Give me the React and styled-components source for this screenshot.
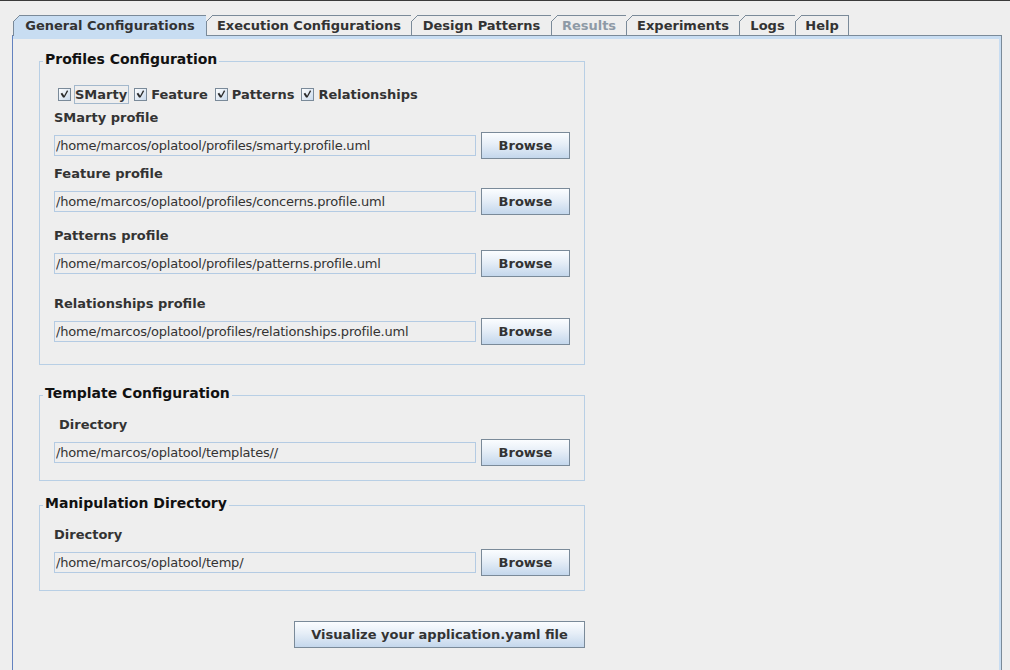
import React from 'react';
import styled, { createGlobalStyle } from 'styled-components';

const Global = createGlobalStyle`
  html, body { margin: 0; padding: 0; background: #eeeeee; overflow: hidden; }
  body { font-family: "DejaVu Sans", "Liberation Sans", sans-serif; }
  * { box-sizing: border-box; }
`;

const Window = styled.div`
  width: 1010px;
  height: 670px;
  overflow: hidden;
  background: #eeeeee;
  border-top: 1px solid #3a3a3a;
  padding-top: 14px;
`;

const TabRow = styled.div`
  display: flex;
  align-items: flex-end;
  height: 20px;
  padding-left: 13px;
  position: relative;
  z-index: 1;
`;

const Tab = styled.div`
  position: relative;
  width: ${p => p.$w}px;
  height: ${p => (p.$selected ? 21 : 20)}px;
  margin-bottom: ${p => (p.$selected ? -1 : 0)}px;
  background: ${p => (p.$selected ? '#c8ddf2' : '#eeeeee')};
  border-top: 1px solid #7a8a99;
  border-left: 1px solid #7a8a99;
  border-right: ${p => (p.$last ? '1px solid #7a8a99' : 'none')};
  font-size: 13px;
  font-weight: bold;
  line-height: 19px;
  text-align: center;
  color: ${p => (p.$disabled ? '#8e9aa6' : '#333333')};
  white-space: nowrap;
  &::before {
    content: '';
    position: absolute;
    top: -1px;
    left: -1px;
    width: 7px;
    height: 7px;
    background: linear-gradient(
      135deg,
      #eeeeee 0,
      #eeeeee calc(50% - 0.6px),
      #7a8a99 calc(50% - 0.6px),
      #7a8a99 calc(50% + 0.6px),
      ${p => (p.$selected ? '#c8ddf2' : '#eeeeee')} calc(50% + 0.6px)
    );
  }
`;

const Panel = styled.div`
  margin-left: 12px;
  width: 990px;
  min-height: 700px;
  border: 1px solid #7a8a99;
  border-left-color: #6382bf;
  box-shadow: inset 0 3px 0 #c8ddf2, inset -2px 0 0 #c8ddf2;
  padding: 14px 0 0 26px;
`;

const Section = styled.fieldset`
  width: 546px;
  margin: ${p => p.$mt || 0}px 0 0 0;
  padding: 0 14px ${p => p.$pb}px 14px;
  border: 1px solid #b8cfe5;
  min-width: 0;
`;

const Legend = styled.legend`
  margin-left: -11px;
  padding: 0 2px 5px 2px;
  font-size: 14px;
  font-weight: bold;
  line-height: 18px;
  color: #111111;
`;

const CheckRow = styled.div`
  display: flex;
  align-items: center;
  height: 18px;
  margin-top: 12px;
  padding-left: 4px;
`;

const CheckItem = styled.label`
  display: flex;
  align-items: center;
  margin-right: 5px;
`;

const CheckText = styled.span`
  margin-left: 3px;
  border: 1px solid ${p => (p.$focused ? '#a3b8cc' : 'transparent')};
  padding: 0 1px 0 0;
  height: 19px;
  font-size: 13px;
  font-weight: bold;
  line-height: 17px;
  color: #333333;
`;

const FieldLabel = styled.div`
  margin-top: ${p => p.$mt}px;
  padding-left: ${p => p.$indent || 0}px;
  height: 18px;
  font-size: 13px;
  font-weight: bold;
  line-height: 18px;
  color: #333333;
`;

const Row = styled.div`
  display: flex;
  align-items: center;
  gap: 5px;
  height: 27px;
  margin-top: 5px;
`;

const PathField = styled.input`
  width: 422px;
  height: 21px;
  margin: 0;
  padding: 0 0 0 1px;
  border: 1px solid #b4cbe3;
  background: #eeeeee;
  font-family: "DejaVu Sans", sans-serif;
  font-size: 13px;
  letter-spacing: -0.2px;
  color: #333333;
  outline: none;
`;

const Button = styled.button`
  width: ${p => p.$w}px;
  height: 27px;
  margin: 0;
  padding: 0;
  border: 1px solid #7a8a99;
  background: linear-gradient(#fbfdff 0%, #e6eef7 45%, #c4d7ec 100%);
  font-family: "DejaVu Sans", sans-serif;
  font-size: 13px;
  font-weight: bold;
  color: #333333;
  cursor: pointer;
`;

const ButtonBar = styled.div`
  width: 546px;
  display: flex;
  justify-content: flex-end;
  margin-top: 30px;
`;

const CheckIcon = () => (
  <svg width="13" height="13" viewBox="0 0 13 13">
    <defs>
      <linearGradient id="cbg" x1="0" y1="0" x2="1" y2="1">
        <stop offset="0" stopColor="#ffffff" />
        <stop offset="1" stopColor="#c8d9ec" />
      </linearGradient>
    </defs>
    <rect x="0.5" y="0.5" width="12" height="12" fill="url(#cbg)" stroke="#7a8a99" />
    <path d="M3.4 5.2 L6 9.2" fill="none" stroke="#2b2b2b" strokeWidth="2" />
    <path d="M6 9.2 L9.6 2.6" fill="none" stroke="#2b2b2b" strokeWidth="1.3" />
  </svg>
);

const tabs = [
  { t: 'General Configurations', w: 193, selected: true },
  { t: 'Execution Configurations', w: 205 },
  { t: 'Design Patterns', w: 140 },
  { t: 'Results', w: 75, disabled: true },
  { t: 'Experiments', w: 113 },
  { t: 'Logs', w: 56 },
  { t: 'Help', w: 54, last: true },
];

const profiles = [
  { label: 'SMarty profile', path: '/home/marcos/oplatool/profiles/smarty.profile.uml', mt: 6 },
  { label: 'Feature profile', path: '/home/marcos/oplatool/profiles/concerns.profile.uml', mt: 6 },
  { label: 'Patterns profile', path: '/home/marcos/oplatool/profiles/patterns.profile.uml', mt: 12 },
  { label: 'Relationships profile', path: '/home/marcos/oplatool/profiles/relationships.profile.uml', mt: 18 },
];

const checks = ['SMarty', 'Feature', 'Patterns', 'Relationships'];

export default function App() {
  return (
    <>
      <Global />
      <Window>
        <TabRow>
          {tabs.map(tab => (
            <Tab key={tab.t} $w={tab.w} $selected={tab.selected} $disabled={tab.disabled} $last={tab.last}>
              {tab.t}
            </Tab>
          ))}
        </TabRow>
        <Panel>
          <Section $pb={19}>
            <Legend>Profiles Configuration</Legend>
            <CheckRow>
              {checks.map((c, i) => (
                <CheckItem key={c}>
                  <CheckIcon />
                  <CheckText $focused={i === 0}>{c}</CheckText>
                </CheckItem>
              ))}
            </CheckRow>
            {profiles.map(p => (
              <React.Fragment key={p.label}>
                <FieldLabel $mt={p.mt}>{p.label}</FieldLabel>
                <Row>
                  <PathField readOnly value={p.path} />
                  <Button $w={89}>Browse</Button>
                </Row>
              </React.Fragment>
            ))}
          </Section>

          <Section $mt={19} $pb={14}>
            <Legend>Template Configuration</Legend>
            <FieldLabel $mt={9} $indent={5}>Directory</FieldLabel>
            <Row>
              <PathField readOnly value="/home/marcos/oplatool/templates//" />
              <Button $w={89}>Browse</Button>
            </Row>
          </Section>

          <Section $mt={13} $pb={14}>
            <Legend>Manipulation Directory</Legend>
            <FieldLabel $mt={9}>Directory</FieldLabel>
            <Row>
              <PathField readOnly value="/home/marcos/oplatool/temp/" />
              <Button $w={89}>Browse</Button>
            </Row>
          </Section>

          <ButtonBar>
            <Button $w={291}>Visualize your application.yaml file</Button>
          </ButtonBar>
        </Panel>
      </Window>
    </>
  );
}
